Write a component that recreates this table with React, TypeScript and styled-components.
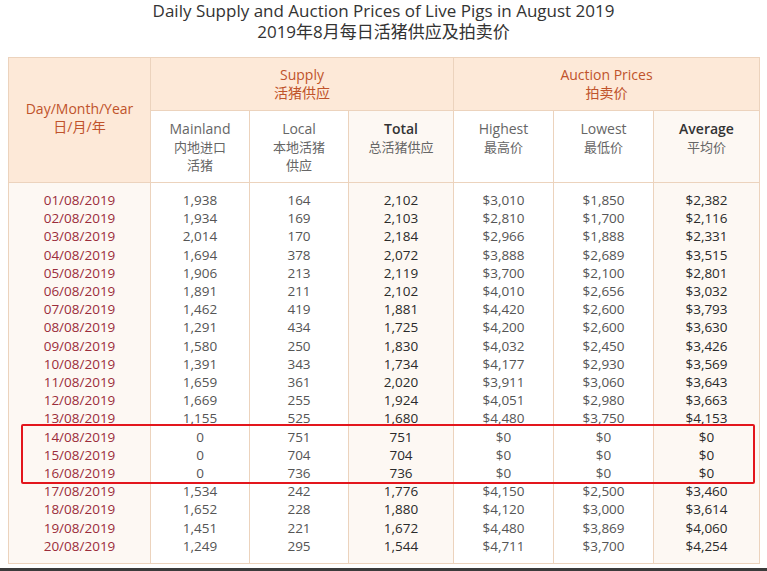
import React from "react"
import styled, { createGlobalStyle } from "styled-components"

const rows: string[][] = [
    ["01/08/2019", "1,938", "164", "2,102", "$3,010", "$1,850", "$2,382"],
    ["02/08/2019", "1,934", "169", "2,103", "$2,810", "$1,700", "$2,116"],
    ["03/08/2019", "2,014", "170", "2,184", "$2,966", "$1,888", "$2,331"],
    ["04/08/2019", "1,694", "378", "2,072", "$3,888", "$2,689", "$3,515"],
    ["05/08/2019", "1,906", "213", "2,119", "$3,700", "$2,100", "$2,801"],
    ["06/08/2019", "1,891", "211", "2,102", "$4,010", "$2,656", "$3,032"],
    ["07/08/2019", "1,462", "419", "1,881", "$4,420", "$2,600", "$3,793"],
    ["08/08/2019", "1,291", "434", "1,725", "$4,200", "$2,600", "$3,630"],
    ["09/08/2019", "1,580", "250", "1,830", "$4,032", "$2,450", "$3,426"],
    ["10/08/2019", "1,391", "343", "1,734", "$4,177", "$2,930", "$3,569"],
    ["11/08/2019", "1,659", "361", "2,020", "$3,911", "$3,060", "$3,643"],
    ["12/08/2019", "1,669", "255", "1,924", "$4,051", "$2,980", "$3,663"],
    ["13/08/2019", "1,155", "525", "1,680", "$4,480", "$3,750", "$4,153"],
    ["14/08/2019", "0", "751", "751", "$0", "$0", "$0"],
    ["15/08/2019", "0", "704", "704", "$0", "$0", "$0"],
    ["16/08/2019", "0", "736", "736", "$0", "$0", "$0"],
    ["17/08/2019", "1,534", "242", "1,776", "$4,150", "$2,500", "$3,460"],
    ["18/08/2019", "1,652", "228", "1,880", "$4,120", "$3,000", "$3,614"],
    ["19/08/2019", "1,451", "221", "1,672", "$4,480", "$3,869", "$4,060"],
    ["20/08/2019", "1,249", "295", "1,544", "$4,711", "$3,700", "$4,254"],
]

const subHeads = [
    { en: "Mainland", zh: ["内地进口", "活猪"] },
    { en: "Local", zh: ["本地活猪", "供应"] },
    { en: "Total", zh: ["总活猪供应"], strong: true, tint: true },
    { en: "Highest", zh: ["最高价"] },
    { en: "Lowest", zh: ["最低价"] },
    { en: "Average", zh: ["平均价"], strong: true, tint: true },
]

// which columns get the cream tint / darker text
const tinted = [true, false, false, true, false, false, true]
const bold = [false, false, false, true, false, false, true]

export default function App() {
    return (
        <>
            <GlobalStyle />
            <Page>
                <Title>
                    <TitleLine>Daily Supply and Auction Prices of Live Pigs in August 2019</TitleLine>
                    <TitleLine>2019年8月每日活猪供应及拍卖价</TitleLine>
                </Title>
                <TableWrap>
                    <Table>
                        <colgroup>
                            <col style={{ width: 142 }} />
                            <col style={{ width: 99 }} />
                            <col style={{ width: 99 }} />
                            <col style={{ width: 105 }} />
                            <col style={{ width: 100 }} />
                            <col style={{ width: 100 }} />
                            <col style={{ width: 106 }} />
                        </colgroup>
                        <thead>
                            <tr>
                                <GroupHead rowSpan={2} $tall>
                                    Day/Month/Year<br />日/月/年
                                </GroupHead>
                                <GroupHead colSpan={3}>Supply<br />活猪供应</GroupHead>
                                <GroupHead colSpan={3}>Auction Prices<br />拍卖价</GroupHead>
                            </tr>
                            <tr>
                                {subHeads.map((h) => (
                                    <SubHead key={h.en} $tint={!!h.tint}>
                                        <SubEn $strong={!!h.strong}>{h.en}</SubEn>
                                        {h.zh.map((z) => (
                                            <div key={z}>{z}</div>
                                        ))}
                                    </SubHead>
                                ))}
                            </tr>
                        </thead>
                        <tbody>
                            {rows.map((r, i) => (
                                <tr key={r[0]}>
                                    {r.map((v, c) => (
                                        <Cell
                                            key={c}
                                            $tint={tinted[c]}
                                            $bold={bold[c]}
                                            $date={c === 0}
                                            $first={i === 0}
                                            $last={i === rows.length - 1}
                                        >
                                            {v}
                                        </Cell>
                                    ))}
                                </tr>
                            ))}
                        </tbody>
                    </Table>
                    <Highlight />
                </TableWrap>
                <BottomEdge />
            </Page>
        </>
    )
}

const GlobalStyle = createGlobalStyle`
    html, body {
        margin: 0;
        padding: 0;
        background: #ffffff;
    }
    body {
        font-family: "Open Sans", "Noto Sans CJK SC", sans-serif;
    }
`
const Page = styled.div`
    width: 767px;
    height: 571px;
    overflow: hidden;
    display: flex;
    flex-direction: column;
`
const Title = styled.div`
    flex-shrink: 0;
    text-align: center;
    color: #333;
    font-size: 17px;
    height: 57px;
`
const TitleLine = styled.div`
    line-height: 21px;
    font-family: "Open Sans", "Noto Sans CJK SC", sans-serif;
`
const TableWrap = styled.div`
    flex-shrink: 0;
    position: relative;
    margin-left: 8px;
    width: 751px;
`
const Table = styled.table`
    width: 751px;
    table-layout: fixed;
    border-collapse: collapse;
    border: 1px solid #ecd3bd;
    font-size: 13.5px;
`
const GroupHead = styled.th<{ $tall?: boolean }>`
    background: #fde9d8;
    color: #c0532b;
    font-weight: 400;
    font-size: 14px;
    line-height: 18px;
    height: 52px;
    padding: 0;
    border: 1px solid #ecd3bd;
    vertical-align: middle;
    ${(p) => (p.$tall ? "padding-bottom: 4px;" : "")}
`
const SubHead = styled.th<{ $tint: boolean }>`
    background: ${(p) => (p.$tint ? "#fdf8f3" : "#ffffff")};
    color: #666;
    font-weight: 400;
    font-size: 13px;
    line-height: 18px;
    height: 62px;
    padding: 9px 0 0;
    vertical-align: top;
    border: 1px solid #ecd3bd;
`
const SubEn = styled.div<{ $strong: boolean }>`
    font-size: 14px;
    color: ${(p) => (p.$strong ? "#333" : "#666")};
    font-weight: ${(p) => (p.$strong ? 600 : 400)};
`
const Cell = styled.td<{ $tint: boolean; $bold: boolean; $date: boolean; $first: boolean; $last: boolean }>`
    background: ${(p) => (p.$tint ? "#fdf8f3" : "#ffffff")};
    color: ${(p) => (p.$date ? "#9b2d3b" : p.$bold ? "#2a2a2a" : "#555")};
    font-weight: ${(p) => (p.$bold ? 500 : 400)};
    text-align: center;
    line-height: 18.2px;
    height: 18.2px;
    padding: ${(p) => (p.$first ? "8px 0 0" : p.$last ? "0 0 8px" : "0")};
    border-left: 1px solid #ecd3bd;
    border-right: 1px solid #ecd3bd;
`
const Highlight = styled.div`
    position: absolute;
    left: 13px;
    top: 367px;
    width: 730px;
    height: 56px;
    border: 2px solid #e3161d;
    border-radius: 2px;
    pointer-events: none;
`
const BottomEdge = styled.div`
    margin-top: auto;
    height: 3px;
    background: #3b3b3b;
`
